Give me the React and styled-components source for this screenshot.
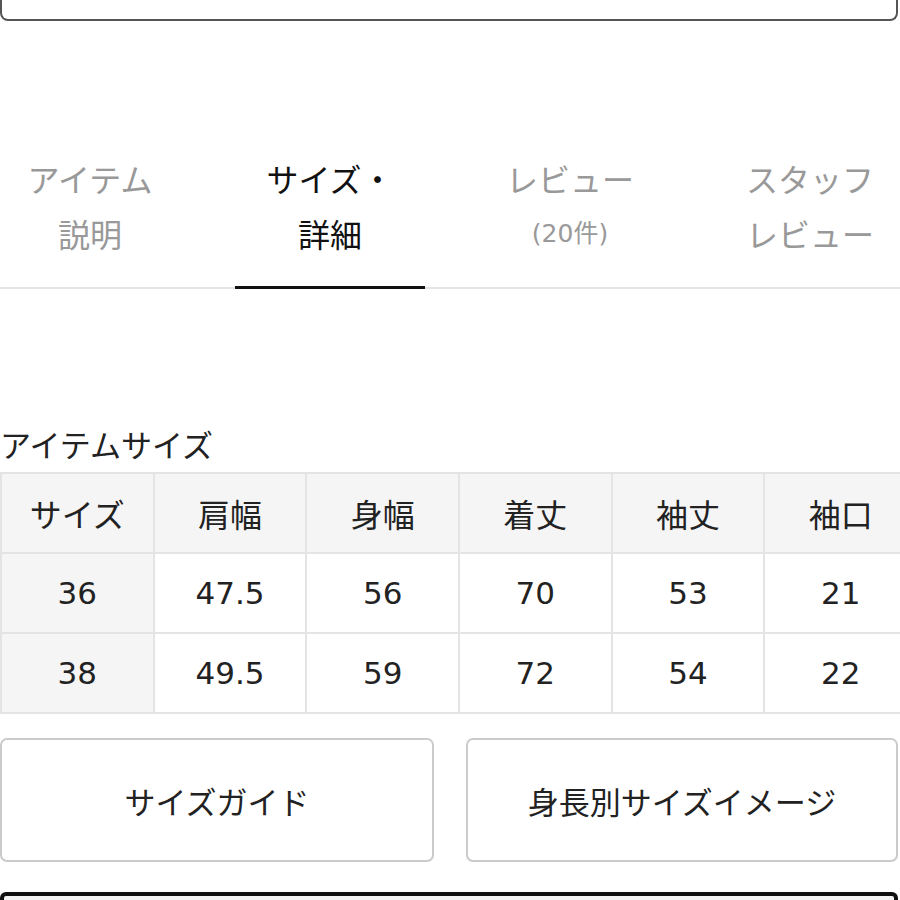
import React from "react";
import styled, { createGlobalStyle } from "styled-components";

const GlobalStyle = createGlobalStyle`
  html, body {
    margin: 0;
    padding: 0;
    background: #fff;
    overflow-x: hidden;
  }
  body {
    font-family: "Liberation Sans", "Noto Sans CJK JP", sans-serif;
    color: #222;
  }
`;

const Page = styled.div`
  width: 900px;
  overflow: hidden;
`;

const TopBox = styled.div`
  height: 19px;
  border: 2px solid #555;
  border-top: none;
  border-radius: 0 0 8px 8px;
  margin-right: 2px;
`;

const TabBar = styled.div`
  margin-top: 130px;
  border-bottom: 2px solid #e4e4e4;
`;

const TabRow = styled.div`
  display: grid;
  grid-template-columns: repeat(4, 240px);
  margin-left: -30px;
`;

const Tab = styled.div`
  margin: 0 25px -2px;
  padding-bottom: 25px;
  border-bottom: 3px solid ${(p) => (p.$active ? "#111" : "transparent")};
  text-align: center;
  font-family: "Noto Sans CJK JP", sans-serif;
  line-height: 55px;
  color: ${(p) => (p.$active ? "#111" : "#999")};
`;

const TabLine = styled.div`
  font-size: ${(p) => (p.$small ? "25px" : "32px")};
  font-family: ${(p) =>
    p.$small ? '"DejaVu Sans", "Noto Sans CJK JP", sans-serif' : "inherit"};
`;

const Heading = styled.h2`
  margin: 135px 0 8px;
  font-family: "Noto Sans CJK JP", sans-serif;
  font-weight: 400;
  font-size: 31px;
  line-height: 40px;
  color: #222;
`;

const Table = styled.table`
  border-collapse: collapse;
  table-layout: fixed;
  width: 918px;
`;

const Cell = styled.td`
  height: 78px;
  padding: 0;
  border: 2px solid #e4e4e4;
  background: ${(p) => (p.$shade ? "#f5f5f5" : "#fff")};
  text-align: center;
  vertical-align: middle;
  font-size: ${(p) => (p.$head ? "32px" : "31px")};
  font-family: ${(p) =>
    p.$head
      ? '"Noto Sans CJK JP", sans-serif'
      : '"DejaVu Sans", "Noto Sans CJK JP", sans-serif'};
  color: #222;
`;

const ButtonRow = styled.div`
  display: grid;
  grid-template-columns: 434px 432px;
  gap: 32px;
  margin-top: 24px;
`;

const Button = styled.button`
  height: 124px;
  border: 2px solid #cbcbcb;
  border-radius: 7px;
  background: #fff;
  font-family: "Noto Sans CJK JP", sans-serif;
  font-size: 31px;
  color: #222;
  padding: 0;
`;

const BottomBox = styled.div`
  margin-top: 30px;
  height: 40px;
  border: 4px solid #111;
  border-radius: 6px 6px 0 0;
  margin-right: 2px;
  background: #f4f4f4;
`;

const tabs = [
  { lines: ["アイテム", "説明"] },
  { lines: ["サイズ・", "詳細"], active: true },
  { lines: ["レビュー", "(20件)"], small: true },
  { lines: ["スタッフ", "レビュー"] },
];

const headers = ["サイズ", "肩幅", "身幅", "着丈", "袖丈", "袖口"];
const rows = [
  ["36", "47.5", "56", "70", "53", "21"],
  ["38", "49.5", "59", "72", "54", "22"],
];

export default function App() {
  return (
    <Page>
      <GlobalStyle />
      <TopBox />
      <TabBar>
        <TabRow>
          {tabs.map((t, i) => (
            <Tab key={i} $active={t.active}>
              <TabLine>{t.lines[0]}</TabLine>
              <TabLine $small={t.small}>{t.lines[1]}</TabLine>
            </Tab>
          ))}
        </TabRow>
      </TabBar>
      <Heading>アイテムサイズ</Heading>
      <Table>
        <tbody>
          <tr>
            {headers.map((h) => (
              <Cell key={h} $head $shade>
                {h}
              </Cell>
            ))}
          </tr>
          {rows.map((r) => (
            <tr key={r[0]}>
              {r.map((v, i) => (
                <Cell key={i} $shade={i === 0}>
                  {v}
                </Cell>
              ))}
            </tr>
          ))}
        </tbody>
      </Table>
      <ButtonRow>
        <Button>サイズガイド</Button>
        <Button>身長別サイズイメージ</Button>
      </ButtonRow>
      <BottomBox />
    </Page>
  );
}
